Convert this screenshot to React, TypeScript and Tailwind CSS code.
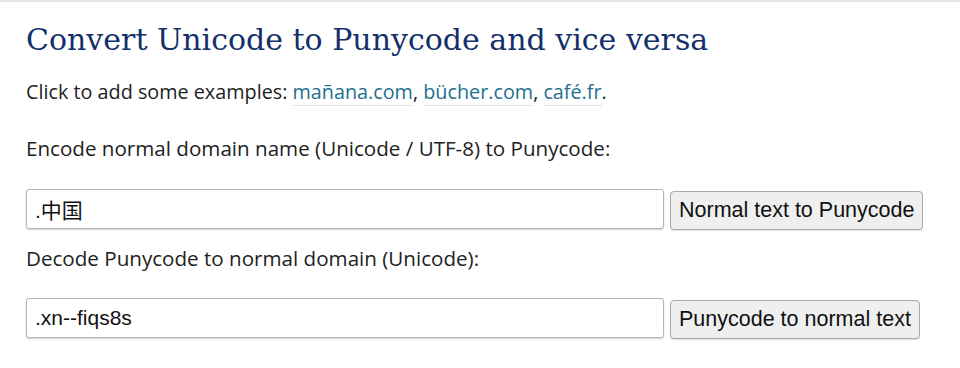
import { useState } from 'react'

const sans = { fontFamily: '"Open Sans", "Noto Sans", sans-serif' }

function Row({ value, label }: { value: string; label: string }) {
  const [v, setV] = useState(value)
  return (
    <div className="flex items-start gap-[6px]">
      <input
        value={v}
        onChange={(e) => setV(e.target.value)}
        className="h-[40px] w-[638px] rounded-[3px] border border-[#b4b4b4] bg-white px-[8px] text-[21px] text-[#111] shadow-[0_1px_2px_rgba(0,0,0,0.18)] outline-none font-['Liberation_Sans','Noto_Sans_CJK_SC',sans-serif]"
      />
      <button className="mt-[2px] h-[39px] rounded-[4px] border border-[#a8a8a8] bg-[#efefef] px-[8px] text-[21.5px] text-[#111] shadow-[0_1px_1px_rgba(0,0,0,0.12)] font-['Liberation_Sans',sans-serif]">
        {label}
      </button>
    </div>
  )
}

export default function App() {
  return (
    <div className="h-[368px] w-[960px] overflow-hidden border-t-2 border-[#e6e6e6] bg-white">
      <div className="pl-[26px] pt-[20px] text-[#222]" style={sans}>
        {/* Title */}
        <h1 className="text-[30px] leading-[36px] text-[#14306b] font-['DejaVu_Serif',serif]">
          Convert Unicode to Punycode and vice versa
        </h1>

        {/* Examples */}
        <p className="mt-[22px] text-[19.8px] leading-[24px]">
          Click to add some examples:{' '}
          <a className="cursor-pointer border-b border-[#dde3ea] text-[#24708f]">mañana.com</a>,{' '}
          <a className="cursor-pointer border-b border-[#dde3ea] text-[#24708f]">bücher.com</a>,{' '}
          <a className="cursor-pointer border-b border-[#dde3ea] text-[#24708f]">café.fr</a>.
        </p>

        <p className="mt-[32px] text-[20.6px] leading-[24px]">
          Encode normal domain name (Unicode / UTF-8) to Punycode:
        </p>
        <div className="mt-[29px]">
          <Row value=".中国" label="Normal text to Punycode" />
        </div>

        <p className="mt-[16px] text-[20.6px] leading-[24px]">
          Decode Punycode to normal domain (Unicode):
        </p>
        <div className="mt-[28px]">
          <Row value=".xn--fiqs8s" label="Punycode to normal text" />
        </div>
      </div>
    </div>
  )
}
